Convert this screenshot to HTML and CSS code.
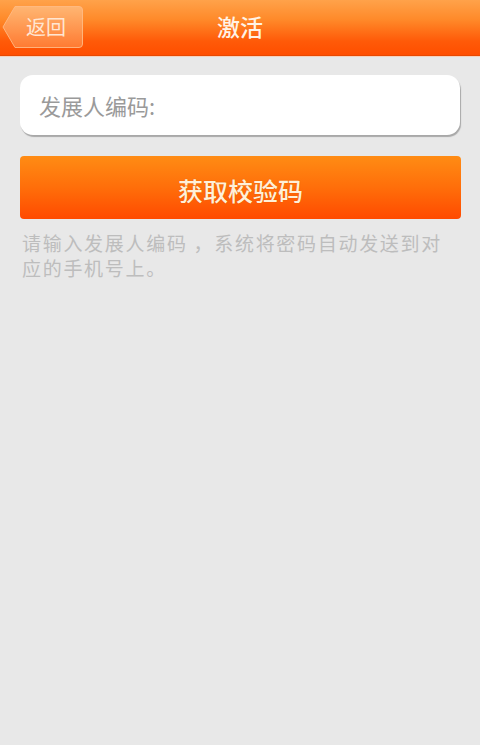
FILE: index.html
```html
<!DOCTYPE html>
<html lang="zh">
<head>
<meta charset="utf-8">
<title>激活</title>
<link rel="stylesheet" href="styles.css">
</head>
<body>
<div class="page">
  <header class="topbar">
    <div class="back">
      <svg class="back-shape" width="82" height="44" viewBox="0 0 82 44" aria-hidden="true">
        <defs>
          <linearGradient id="bg" x1="0" y1="0" x2="0" y2="1">
            <stop offset="0" stop-color="#ffb978"/>
            <stop offset="1" stop-color="#ff8038"/>
          </linearGradient>
        </defs>
        <path d="M1 22 L13 1.5 H77 Q80.5 1.5 80.5 5 V39 Q80.5 42.5 77 42.5 H13 Z" fill="url(#bg)" stroke="#ffbd88" stroke-width="1" opacity="0.9"/>
      </svg>
      <span class="back-label">返回</span>
    </div>
    <h1 class="title">激活</h1>
  </header>
  <main class="content">
    <div class="field">发展人编码:</div>
    <button class="primary">获取校验码</button>
    <p class="hint">请输入发展人编码 ，系统将密码自动发送到对<br>应的手机号上。</p>
  </main>
</div>
</body>
</html>
```
FILE: styles.css
```css
* { box-sizing: border-box; }
html, body { margin: 0; padding: 0; }
body {
  width: 480px;
  height: 745px;
  background: #e8e8e8;
  font-family: "Noto Sans CJK SC", "Noto Sans", sans-serif;
  overflow: hidden;
}
.page { display: flex; flex-direction: column; }
.topbar {
  position: relative;
  height: 56px;
  background: linear-gradient(to bottom, #ffa24a 0%, #ff8a2a 35%, #ff5a08 75%, #ff4e00 100%);
  border-bottom: 1px solid #e84800;
  box-shadow: 0 1px 0 #f6d0bc;
  display: flex;
  align-items: flex-start;
  justify-content: center;
}
.back {
  position: absolute;
  left: 2px;
  top: 5px;
  width: 82px;
  height: 44px;
}
.back-shape { position: absolute; left: 0; top: 0; }
.back-label {
  position: absolute;
  left: 24px;
  top: 0;
  line-height: 44px;
  font-size: 20px;
  color: #ffe6d2;
}
.title {
  margin: 0;
  font-size: 23px;
  font-weight: 500;
  color: #fff3e6;
  line-height: 52px;
}
.content {
  padding: 19px 20px 0 20px;
  display: flex;
  flex-direction: column;
}
.field {
  height: 60px;
  width: 440px;
  background: #fff;
  border-radius: 13px;
  box-shadow: 1px 2px 1px #a8a8a8;
  padding-left: 19px;
  display: flex;
  align-items: center;
  font-size: 22px;
  color: #9a9a9a;
}
.primary {
  margin-top: 21px;
  height: 63px;
  width: 441px;
  border: 0;
  border-radius: 4px;
  background: linear-gradient(to bottom, #ff8c14 0%, #ff6e0a 50%, #ff4a00 100%);
  color: #fff0d8;
  font-family: inherit;
  font-size: 25px;
  font-weight: 500;
  padding: 4px 0 0 0;
  text-shadow: 0 0 1px rgba(120,40,0,0.3);
}
.hint {
  margin: 11px 0 0 2px;
  font-size: 19px;
  letter-spacing: 1.7px;
  line-height: 25px;
  color: #bdbdbd;
  width: 450px;
  white-space: nowrap;
}
```
